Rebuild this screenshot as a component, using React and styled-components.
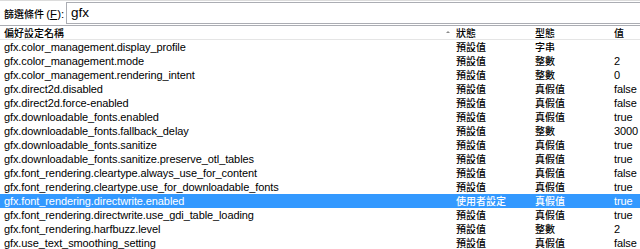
import React from 'react'
import styled, { createGlobalStyle } from 'styled-components'

const GlobalStyle = createGlobalStyle`
  html, body {
    margin: 0;
    padding: 0;
    background: #ffffff;
    overflow: hidden;
  }
  body {
    font-family: "Liberation Sans", "Noto Sans CJK TC", sans-serif;
    font-size: 12px;
    color: #000;
  }
`

const prefs = [
  ['gfx.color_management.display_profile', '預設值', '字串', ''],
  ['gfx.color_management.mode', '預設值', '整數', '2'],
  ['gfx.color_management.rendering_intent', '預設值', '整數', '0'],
  ['gfx.direct2d.disabled', '預設值', '真假值', 'false'],
  ['gfx.direct2d.force-enabled', '預設值', '真假值', 'false'],
  ['gfx.downloadable_fonts.enabled', '預設值', '真假值', 'true'],
  ['gfx.downloadable_fonts.fallback_delay', '預設值', '整數', '3000'],
  ['gfx.downloadable_fonts.sanitize', '預設值', '真假值', 'true'],
  ['gfx.downloadable_fonts.sanitize.preserve_otl_tables', '預設值', '真假值', 'true'],
  ['gfx.font_rendering.cleartype.always_use_for_content', '預設值', '真假值', 'false'],
  ['gfx.font_rendering.cleartype.use_for_downloadable_fonts', '預設值', '真假值', 'true'],
  ['gfx.font_rendering.directwrite.enabled', '使用者設定', '真假值', 'true'],
  ['gfx.font_rendering.directwrite.use_gdi_table_loading', '預設值', '真假值', 'true'],
  ['gfx.font_rendering.harfbuzz.level', '預設值', '整數', '2'],
  ['gfx.use_text_smoothing_setting', '預設值', '真假值', 'false'],
]

const App = () => {
  return (
    <Window>
      <GlobalStyle />
      <FilterBar>
        <FilterLabel>
          篩選條件 <Latin>(<u>F</u>):</Latin>
        </FilterLabel>
        <FilterInput>gfx</FilterInput>
      </FilterBar>
      <List>
        <HeaderRow>
          <HeadCell>偏好設定名稱</HeadCell>
          <HeadCell sorted>狀態</HeadCell>
          <HeadCell>型態</HeadCell>
          <HeadCell>值</HeadCell>
        </HeaderRow>
        {prefs.map(([name, status, type, value]) => (
          <Row key={name} selected={status === '使用者設定'}>
            <Cell>{name}</Cell>
            <Cell cjk>{status}</Cell>
            <Cell cjk>{type}</Cell>
            <Cell>{value}</Cell>
          </Row>
        ))}
      </List>
    </Window>
  )
}

export default App

const Window = styled.div`
  width: 640px;
  height: 249px;
  display: flex;
  flex-direction: column;
  border-top: 1px solid #dcdcdc;
  box-sizing: border-box;
  overflow: hidden;
`

const FilterBar = styled.div`
  display: flex;
  align-items: center;
  height: 24px;
  padding-top: 1px;
  box-sizing: border-box;
`

const FilterLabel = styled.div`
  font-family: "Noto Sans CJK TC", sans-serif;
  font-size: 10px;
  font-weight: 500;
  padding-left: 4px;
  width: 62px;
  white-space: nowrap;
`

const Latin = styled.span`
  font-family: "Liberation Sans", sans-serif;
  font-weight: 400;
  font-size: 11.5px;
`

const FilterInput = styled.div`
  flex: 1;
  height: 22px;
  border: 1px solid #abadb3;
  border-right: none;
  box-sizing: border-box;
  padding-left: 4px;
  font-size: 13.5px;
  line-height: 20px;
`

const List = styled.div`
  margin-top: 1px;
  border-top: 1px solid #abadb3;
  display: flex;
  flex-direction: column;
`

const columns = `
  display: grid;
  grid-template-columns: 452px 79px 79px 1fr;
  height: 14px;
  align-items: center;
  white-space: nowrap;
`

const HeaderRow = styled.div`
  ${columns}
  height: 13px;
  border-bottom: 1px solid #e5e5e5;
`

const HeadCell = styled.div`
  position: relative;
  padding-left: 4px;
  font-family: "Noto Sans CJK TC", sans-serif;
  font-size: 10px;
  font-weight: 500;
  line-height: 13px;
  ${(p) =>
    p.sorted &&
    `
    &::before {
      content: '';
      position: absolute;
      left: -6px;
      top: 5px;
      border-left: 2px solid transparent;
      border-right: 2px solid transparent;
      border-bottom: 2px solid #8a8a8a;
    }
  `}
`

const Row = styled.div`
  ${columns}
  background: ${(p) => (p.selected ? '#3399ff' : 'transparent')};
  color: ${(p) => (p.selected ? '#ffffff' : '#000000')};
`

const Cell = styled.div`
  padding-left: 4px;
  overflow: hidden;
  line-height: 14px;
  font-family: ${(p) =>
    p.cjk ? '"Noto Sans CJK TC", sans-serif' : '"Liberation Sans", sans-serif'};
  font-size: ${(p) => (p.cjk ? '10px' : '11px')};
  font-weight: ${(p) => (p.cjk ? 500 : 400)};
  letter-spacing: ${(p) => (p.cjk ? '0' : '-0.1px')};
`
